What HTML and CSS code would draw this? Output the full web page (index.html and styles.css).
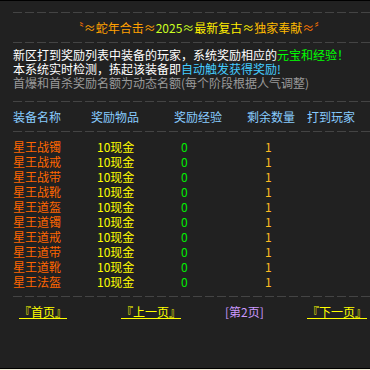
FILE: index.html
```html
<!DOCTYPE html>
<html lang="zh-CN">
<head>
<meta charset="utf-8">
<title>奖励列表</title>
<link rel="stylesheet" href="styles.css">
</head>
<body>
<div class="page">
  <div class="wrap">
    <div class="dash"></div>
    <div class="title">
      <span class="c-red">〝</span><span class="c-org">≈蛇年合击≈</span><span class="c-lime">2025≈</span><span class="c-yel">最新复古≈</span><span class="c-gold">独家奉献</span><span class="c-red">≈〞</span>
    </div>
    <div class="dash"></div>
    <div class="intro">
      <p class="white">新区打到奖励列表中装备的玩家，系统奖励相应的<span class="green">元宝和经验！</span></p>
      <p class="white">本系统实时检测，拣起该装备即<span class="cyan">自动触发获得奖励!</span></p>
      <p class="gray">首爆和首杀奖励名额为动态名额(每个阶段根据人气调整)</p>
    </div>
    <div class="dash"></div>
    <div class="grid head">
      <div>装备名称</div><div>奖励物品</div><div>奖励经验</div><div>剩余数量</div><div>打到玩家</div>
    </div>
    <div class="dash"></div>
    <div class="rows">
      <div class="grid row"><div class="name">星王战镯</div><div class="item">10现金</div><div class="exp">0</div><div class="num">1</div><div></div></div>
      <div class="grid row"><div class="name">星王战戒</div><div class="item">10现金</div><div class="exp">0</div><div class="num">1</div><div></div></div>
      <div class="grid row"><div class="name">星王战带</div><div class="item">10现金</div><div class="exp">0</div><div class="num">1</div><div></div></div>
      <div class="grid row"><div class="name">星王战靴</div><div class="item">10现金</div><div class="exp">0</div><div class="num">1</div><div></div></div>
      <div class="grid row"><div class="name">星王道盔</div><div class="item">10现金</div><div class="exp">0</div><div class="num">1</div><div></div></div>
      <div class="grid row"><div class="name">星王道镯</div><div class="item">10现金</div><div class="exp">0</div><div class="num">1</div><div></div></div>
      <div class="grid row"><div class="name">星王道戒</div><div class="item">10现金</div><div class="exp">0</div><div class="num">1</div><div></div></div>
      <div class="grid row"><div class="name">星王道带</div><div class="item">10现金</div><div class="exp">0</div><div class="num">1</div><div></div></div>
      <div class="grid row"><div class="name">星王道靴</div><div class="item">10现金</div><div class="exp">0</div><div class="num">1</div><div></div></div>
      <div class="grid row"><div class="name">星王法盔</div><div class="item">10现金</div><div class="exp">0</div><div class="num">1</div><div></div></div>
    </div>
    <div class="dash"></div>
    <div class="pager">
      <a class="link" href="#">『首页』</a>
      <a class="link" href="#">『上一页』</a>
      <span class="cur">[第2页]</span>
      <a class="link" href="#">『下一页』</a>
    </div>
  </div>
</div>
</body>
</html>
```

FILE: styles.css
```css
html, body {
  margin: 0;
  padding: 0;
  background: #f3efd9;
  overflow: hidden;
}
body {
  width: 370px;
  height: 370px;
  font-family: "Noto Sans CJK SC", "Liberation Sans", sans-serif;
  font-size: 12px;
}
.page {
  box-sizing: border-box;
  height: 369px;
  background: #212121;
  border-top: 1px solid #000;
  border-bottom: 1px solid #000;
  overflow: hidden;
  padding-top: 11px;
}
.wrap {
  margin-left: 13px;
  width: 372px;
}
.dash {
  height: 1px;
  background: repeating-linear-gradient(90deg, #444 0 9px, transparent 9px 12px);
}
.title {
  height: 29px;
  line-height: 29px;
  text-align: center;
  white-space: nowrap;
}
.c-red { color: #ff7700; }
.c-org { color: #ffa000; }
.c-lime { color: #ccff22; }
.c-yel { color: #ffee00; }
.c-gold { color: #ffbb00; }
.intro {
  padding: 5px 0 11px;
}
.intro p {
  margin: 0;
  line-height: 14px;
  white-space: nowrap;
}
.white { color: #ffffff; }
.green { color: #00ff00; }
.cyan { color: #44ccff; }
.gray { color: #9a9a9a; }
.grid {
  display: grid;
  grid-template-columns: 78px 83px 73px 60px auto;
  white-space: nowrap;
}
.head {
  height: 29px;
  line-height: 29px;
  color: #88ccff;
}
.rows {
  padding: 7px 0;
}
.row {
  height: 15px;
  line-height: 15px;
}
.name { color: #ff6600; }
.item { color: #ffff00; padding-left: 6px; }
.exp { color: #00ee00; padding-left: 7px; }
.num { color: #ffbb22; padding-left: 18px; }
.pager {
  display: grid;
  grid-template-columns: 102px 104px 82px auto;
  padding: 8px 0 0 6px;
  line-height: 14px;
  white-space: nowrap;
}
.link {
  color: #ffff00;
  text-decoration: underline;
  justify-self: start;
}
.cur {
  color: #cc99ff;
}
```
